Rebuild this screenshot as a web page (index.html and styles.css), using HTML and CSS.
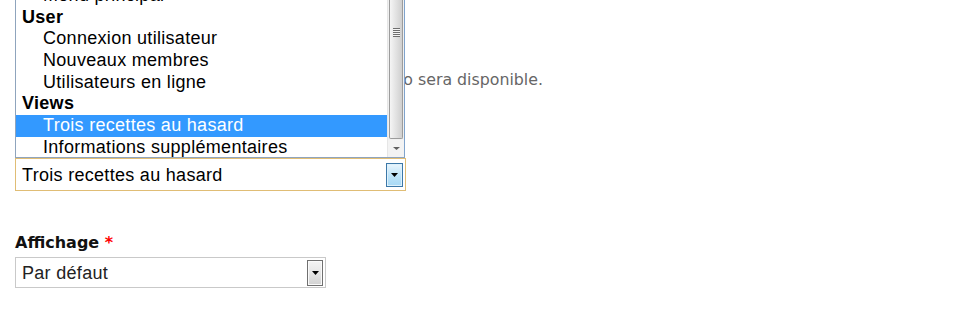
FILE: index.html
```html
<!DOCTYPE html>
<html lang="fr">
<head>
<meta charset="utf-8">
<title>Bloc</title>
<link rel="stylesheet" href="styles.css">
</head>
<body>
<div class="page">
  <div class="field">
    <div class="desc">Le bloc dans lequel la vidéo sera disponible.</div>
    <div class="select sel-focus">
      <span class="sel-text">Trois recettes au hasard</span>
      <span class="sel-btn btn-blue"><svg width="7" height="4" viewBox="0 0 7 4"><path d="M0 0H7L3.5 4Z" fill="#000"/></svg></span>
    </div>
  </div>
  <div class="field field2">
    <label class="label">Affichage <span class="req">*</span></label>
    <div class="select sel-plain">
      <span class="sel-text">Par défaut</span>
      <span class="sel-btn btn-grey"><svg width="7" height="4" viewBox="0 0 7 4"><path d="M0 0H7L3.5 4Z" fill="#000"/></svg></span>
    </div>
  </div>

  <div class="listbox">
    <ul class="lb-list">
      <li class="opt">Menu principal</li>
      <li class="grp">User</li>
      <li class="opt">Connexion utilisateur</li>
      <li class="opt">Nouveaux membres</li>
      <li class="opt">Utilisateurs en ligne</li>
      <li class="grp">Views</li>
      <li class="opt sel">Trois recettes au hasard</li>
      <li class="opt">Informations supplémentaires</li>
    </ul>
    <div class="lb-scroll">
      <div class="thumb"><span class="grip"></span></div>
      <div class="down"><svg width="7" height="3" viewBox="0 0 7 3"><path d="M0 0H7L3.5 3Z" fill="#606060"/></svg></div>
    </div>
  </div>
</div>
</body>
</html>
```

FILE: styles.css
```css
* { box-sizing: border-box; }
html, body { margin: 0; padding: 0; background: #fff; }
.page {
  position: relative;
  display: flow-root;
  padding-left: 15px;
  font-family: "DejaVu Sans", sans-serif;
}
.desc {
  margin-top: 70px;
  width: 528px;
  font-size: 15.8px;
  line-height: 20px;
  color: #666;
  text-align: right;
  white-space: nowrap;
}
.select {
  display: flex;
  align-items: center;
  justify-content: space-between;
  font-family: "Liberation Sans", Arial, sans-serif;
  font-size: 18px;
  letter-spacing: 0.3px;
  color: #000;
  background: #fff;
}
.sel-focus {
  margin-top: 68px;
  width: 391px;
  height: 33px;
  border: 1px solid #e0bd75;
  padding: 1px 2px 0 6px;
}
.sel-plain {
  margin-top: 4px;
  width: 311px;
  height: 31px;
  border: 1px solid #c9c9c9;
  padding: 0 2px 0 6px;
  color: #222;
}
.sel-text { line-height: 20px; }
.sel-btn {
  display: flex;
  align-items: center;
  justify-content: center;
}
.btn-blue {
  width: 17px;
  height: 24px;
  border: 1px solid #3c78a8;
  background: linear-gradient(#eaf6fd, #bfe4f9 50%, #a7d9f5);
  box-shadow: inset 0 0 0 1px #def1fc;
}
.btn-grey {
  width: 16px;
  height: 26px;
  border: 1px solid #707070;
  background: linear-gradient(#f4f4f4, #e6e6e6 50%, #d2d2d2);
  box-shadow: inset 0 0 0 1px #fafafa;
}
.field2 { margin-top: 42px; }
.label {
  display: block;
  font-weight: bold;
  font-size: 16px;
  line-height: 20px;
  color: #111;
}
.req { color: #f00; }

.listbox {
  position: absolute;
  top: -16px;
  left: 15px;
  width: 390px;
  height: 174px;
  border: 1px solid #8fa4bd;
  border-right-color: #7fa3cc;
  background: #fff;
  display: flex;
  overflow: hidden;
}
.lb-list {
  list-style: none;
  margin: 0;
  padding: 0;
  flex: 1;
  font-family: "Liberation Sans", Arial, sans-serif;
  font-size: 18px;
  letter-spacing: 0.3px;
  color: #000;
}
.lb-list li {
  height: 21.7px;
  line-height: 21.7px;
  white-space: nowrap;
}
.grp { font-weight: bold; padding-left: 6px; }
.opt { padding-left: 27px; }
.opt.sel { background: #3399ff; color: #fff; }
.lb-scroll {
  width: 17px;
  display: flex;
  flex-direction: column;
  background: #f0f0f0;
  border-left: 1px solid #e6e6e6;
}
.thumb {
  flex: 1;
  margin: 0 1px 1px 1px;
  border: 1px solid #9c9c9c;
  border-top: none;
  border-radius: 0 0 2px 2px;
  background: linear-gradient(90deg, #f5f5f5, #e4e4e4 45%, #cfcfcf);
  position: relative;
  display: flex;
  justify-content: center;
}
.grip {
  margin-top: 43px;
  width: 7px;
  height: 9px;
  background: repeating-linear-gradient(#6e6e6e 0 1px, #f4f4f4 1px 2px);
}
.down {
  height: 17px;
  display: flex;
  align-items: center;
  justify-content: center;
  background: #f3f3f3;
}
```
